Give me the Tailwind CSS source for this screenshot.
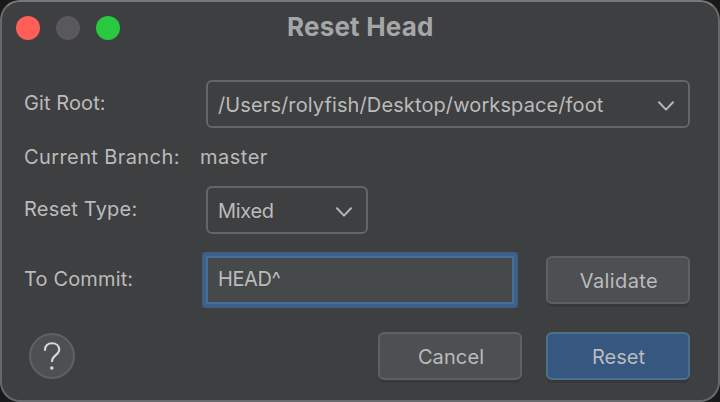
<!DOCTYPE html>
<html lang="en">
<head>
<meta charset="utf-8">
<title>Reset Head</title>
<script src="https://cdn.jsdelivr.net/npm/@tailwindcss/browser@4"></script>
</head>
<body class="bg-[#19191a] overflow-hidden">
<main class="w-[720px] h-[402px] rounded-[20px] border-2 border-[#68696b] border-t-[#77787a] bg-[#3e3f41] font-['Inter',sans-serif] text-[20px] leading-6 text-[#bbbbbb] tracking-[0.4px] whitespace-nowrap">
  <header class="grid grid-cols-[285px_1fr] h-[78px]">
    <div class="flex gap-4 pl-[14px] pt-[14px]">
      <span class="size-6 rounded-full bg-[#ff5f57]"></span>
      <span class="size-6 rounded-full bg-[#59595b]"></span>
      <span class="size-6 rounded-full bg-[#28c840]"></span>
    </div>
    <h1 class="pt-[9px] text-[26px] leading-8 font-bold tracking-[0.2px] text-[#a5a6a8]">Reset Head</h1>
  </header>
  <div class="flex h-12 pl-[22px]">
    <label class="w-[182px] pt-[11px] tracking-[0.1px]">Git Root:</label>
    <div class="flex w-[484px] justify-between rounded-[6px] border-2 border-[#646567] pl-[10px] pt-[11px] pr-[14px]">
      <span class="tracking-[0.11px]">/Users/rolyfish/Desktop/workspace/foot</span>
      <svg class="mt-[5px] h-4 w-[16px]" viewBox="0 0 16 16" fill="none" stroke="#b4b6b9" stroke-width="2" stroke-linecap="round" stroke-linejoin="round"><path d="M1 4.3l7 7.3L15 4.3"/></svg>
    </div>
  </div>
  <div class="flex h-[58px] pl-[22px] pt-[17px]">
    <span class="w-[176px]">Current Branch:</span>
    <span class="tracking-[0.5px]">master</span>
  </div>
  <div class="flex h-12 pl-[22px]">
    <label class="w-[182px] pt-[11px] tracking-[0.2px]">Reset Type:</label>
    <div class="flex w-[162px] justify-between rounded-[6px] border-2 border-[#646567] pl-[10px] pt-[11px] pr-[14px]">
      <span class="tracking-[-0.3px]">Mixed</span>
      <svg class="mt-[5px] h-4 w-[16px]" viewBox="0 0 16 16" fill="none" stroke="#b4b6b9" stroke-width="2" stroke-linecap="round" stroke-linejoin="round"><path d="M1 4.3l7 7.3L15 4.3"/></svg>
    </div>
  </div>
  <div class="flex h-[74px] pl-[22px] pt-[18px]">
    <label class="w-[178px] pt-[15px] tracking-[0.15px]">To Commit:</label>
    <div class="h-14 w-[316px] rounded-[4px] bg-[#3d6185] p-1">
      <div class="h-12 border-2 border-[#466d94] bg-[#45494a] pl-[10px] pt-[9px] tracking-[-0.4px]">HEAD^</div>
    </div>
    <button class="ml-7 mt-1 h-12 w-36 rounded-[6px] border-2 border-[#5e6163] bg-[#4c5052] pl-[2px] pt-[2px] tracking-[0.4px] shadow-[0_4px_0_-1px_#37383a]">Validate</button>
  </div>
  <footer class="flex pl-[27px] pt-6">
    <button class="mt-[1px] flex size-[46px] items-center justify-center rounded-full border-2 border-[#5e6163] bg-[#4c5052]" aria-label="Help">
      <svg class="h-[30px] w-[20px]" viewBox="0 0 20 30" fill="none" stroke="#d6d7d8" stroke-width="2.1" stroke-linecap="round" stroke-linejoin="round"><path d="M3 9C3 4.8 5.8 2.3 10 2.3S17.200 4.800 17.200 8.700c0 5.200-7.200 5.800-7.200 11.600"/><circle cx="9.800" cy="27" r="1.800" fill="#d6d7d8" stroke="none"/></svg>
    </button>
    <button class="ml-[303px] h-12 w-36 rounded-[6px] border-2 border-[#5e6163] bg-[#4c5052] pl-[2px] pt-[2px] tracking-[0.1px] shadow-[0_4px_0_-1px_#37383a]">Cancel</button>
    <button class="ml-6 h-12 w-36 rounded-[6px] border-2 border-[#4c708c] bg-[#365880] pl-[1px] pt-[2px] tracking-[0px] shadow-[0_4px_0_-1px_#37383a]">Reset</button>
  </footer>
</main>
</body>
</html>
